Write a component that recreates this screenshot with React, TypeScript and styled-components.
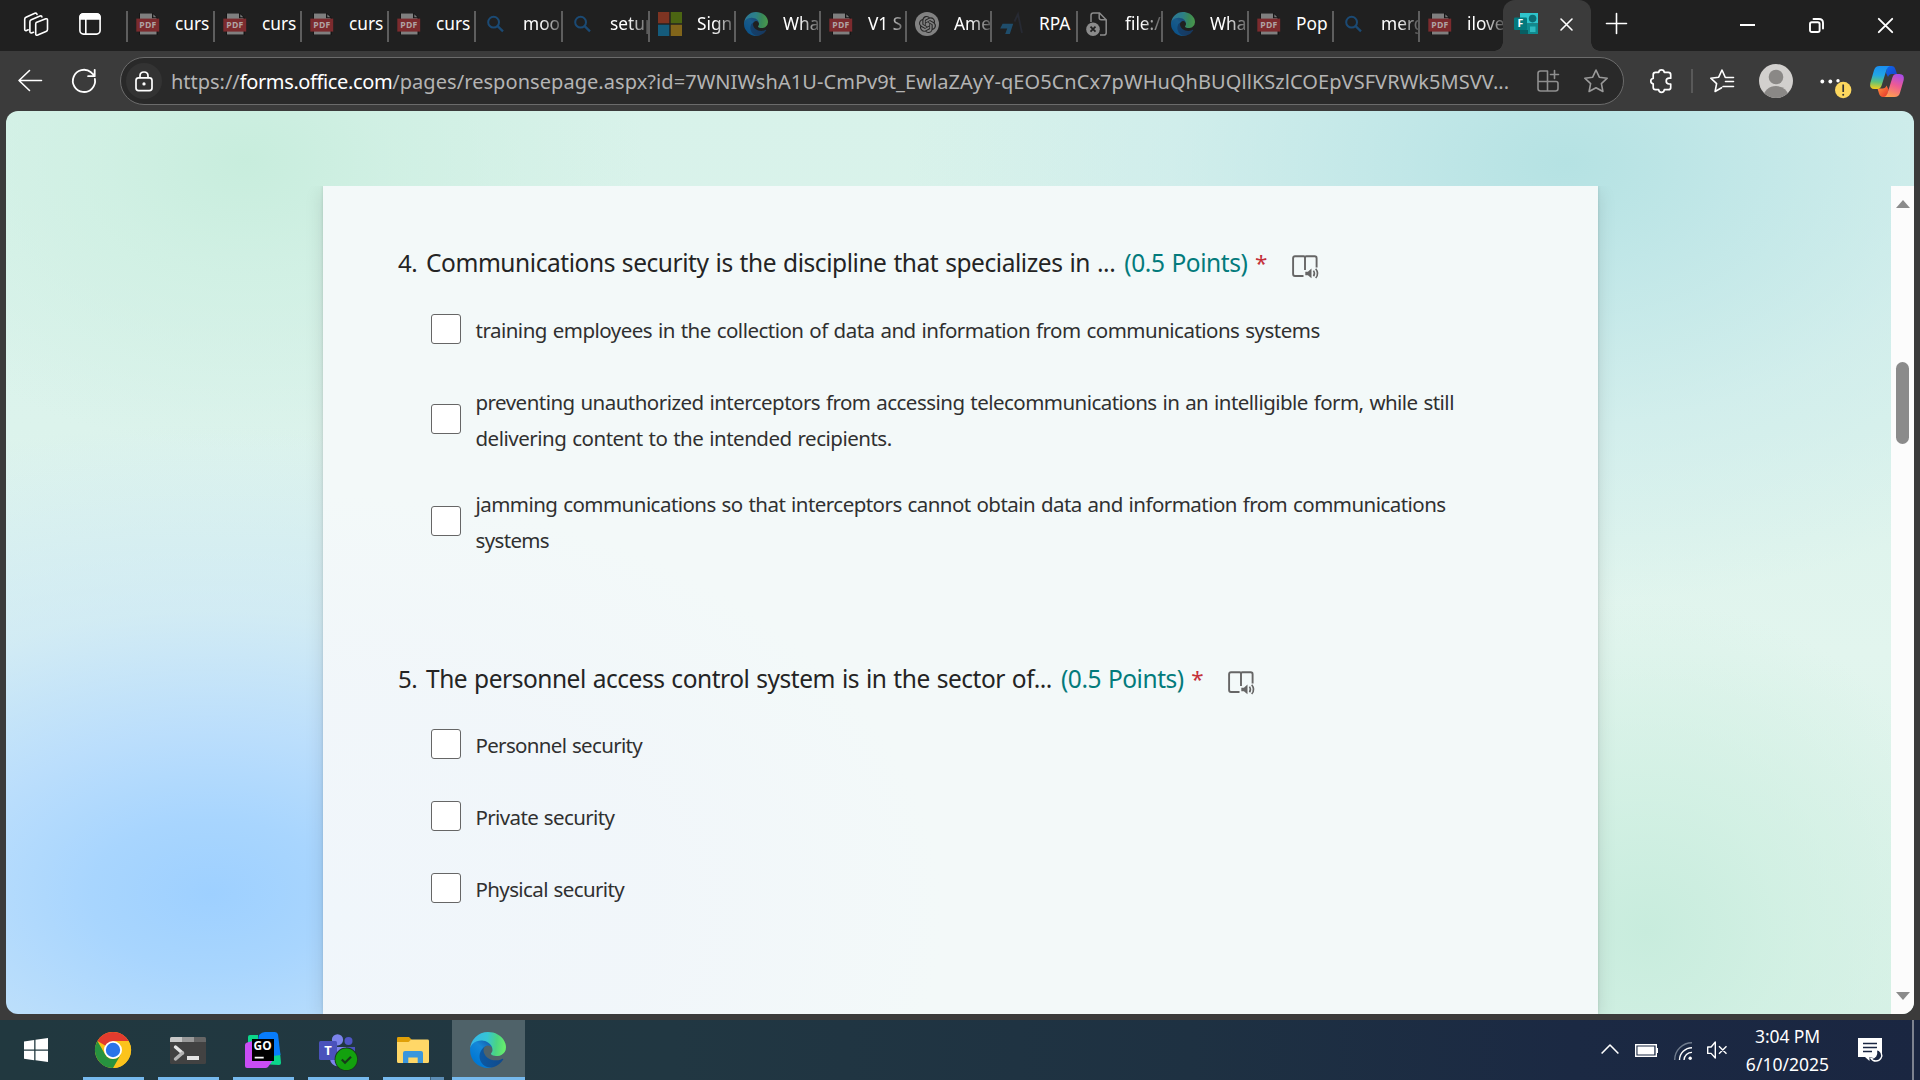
import React from "react";
import styled, { createGlobalStyle, css } from "styled-components";
import { SiOpenai } from "react-icons/si";

const Global = createGlobalStyle`
  * { box-sizing: border-box; }
  html, body { margin: 0; padding: 0; background: #3b3b3b; overflow: hidden; }
  body { font-family: "Noto Sans", "Open Sans", sans-serif; }
`;

const Screen = styled.div`
  width: 1920px;
  height: 1080px;
  display: flex;
  flex-direction: column;
  overflow: hidden;
  background: #3b3b3b;
`;

const Glyph = styled.svg<{ $w: number; $h?: number; $ml?: number; $mt?: number }>`
  display: block;
  flex: none;
  width: ${(p) => p.$w}px;
  height: ${(p) => p.$h ?? p.$w}px;
  margin-left: ${(p) => p.$ml ?? 0}px;
  margin-top: ${(p) => p.$mt ?? 0}px;
  overflow: visible;
`;

/* ---------- tab strip ---------- */

const TabStrip = styled.header`
  height: 51px;
  flex: none;
  display: flex;
  align-items: flex-start;
  background: #202020;
`;

const StripTools = styled.div`
  width: 126px;
  height: 48px;
  flex: none;
  display: flex;
  align-items: center;
  padding-left: 24px;
`;

const Tab = styled.div<{ $w: number }>`
  width: ${(p) => p.$w}px;
  height: 51px;
  flex: none;
  display: flex;
  align-items: flex-start;
`;

const TabRule = styled.span`
  width: 2px;
  height: 31px;
  margin-top: 11px;
  flex: none;
  background: #5e5e5e;
`;

const TabIcon = styled.span`
  width: 24px;
  height: 24px;
  margin: 12px 0 0 8px;
  flex: none;
  display: flex;
  align-items: center;
  justify-content: center;
`;

const TabLabel = styled.span<{ $fade?: boolean }>`
  flex: 1;
  min-width: 0;
  height: 48px;
  margin-left: 15px;
  overflow: hidden;
  white-space: nowrap;
  color: #fff;
  font-size: 17.3px;
  line-height: 48px;
  ${(p) => p.$fade && css`mask-image: linear-gradient(90deg, #000 calc(100% - 20px), rgba(0, 0, 0, 0.25) 100%);`}
`;

const ActiveTab = styled.div`
  width: 88px;
  height: 51px;
  flex: none;
  display: flex;
  align-items: flex-start;
  padding: 12px 0 0 11px;
  background: #3b3b3b;
  border-radius: 12px 12px 0 0;
  position: relative;
  &::before, &::after {
    content: "";
    position: absolute;
    bottom: 0;
    width: 9px;
    height: 9px;
  }
  &::before { left: -9px; background: radial-gradient(circle at 0 0, transparent 8.5px, #3b3b3b 9px); }
  &::after { right: -9px; background: radial-gradient(circle at 100% 0, transparent 8.5px, #3b3b3b 9px); }
`;

const WindowButtons = styled.div`
  flex: 1;
  height: 51px;
  display: flex;
  align-items: flex-start;
`;

/* ---------- toolbar ---------- */

const Toolbar = styled.nav`
  height: 60px;
  flex: none;
  display: flex;
  align-items: center;
  padding-left: 18px;
  background: #3b3b3b;
`;

const AddressBar = styled.div`
  width: 1504px;
  height: 48px;
  margin-left: 24px;
  flex: none;
  display: flex;
  align-items: center;
  border: 1.5px solid #6b6b6b;
  border-radius: 24px;
  background: #292929;
  padding-left: 5px;
`;

const LockDisc = styled.span`
  width: 36px;
  height: 36px;
  flex: none;
  border-radius: 50%;
  background: #333;
  display: flex;
  align-items: center;
  justify-content: center;
`;

const Url = styled.span`
  width: 1366px;
  margin: 1px 0 0 9px;
  flex: none;
  white-space: nowrap;
  font-size: 20px;
  line-height: 44px;
  letter-spacing: 0.06px;
  color: #b4b4b4;
`;

const UrlScheme = styled.span`
  letter-spacing: -0.02px;
`;

const UrlHost = styled.span`
  letter-spacing: -0.38px;
  color: #fff;
`;

const BarRule = styled.span`
  width: 2px;
  height: 24px;
  margin-left: 19px;
  flex: none;
  background: #595959;
`;

const Avatar = styled.span`
  width: 34px;
  height: 34px;
  margin-left: 25px;
  flex: none;
  border-radius: 50%;
  overflow: hidden;
  background: #d2d0ce;
`;

/* ---------- page ---------- */

const Page = styled.main`
  height: 903px;
  width: 1908px;
  margin-left: 6px;
  flex: none;
  display: flex;
  flex-direction: column;
  border-radius: 12px;
  overflow: hidden;
  background:
    radial-gradient(ellipse 760px 470px at 205px 783px, #9ed0ff 0%, rgba(166, 212, 255, 0.96) 16%, rgba(180, 218, 255, 0.85) 34%, rgba(194, 226, 250, 0.5) 60%, rgba(208, 234, 245, 0) 100%),
    radial-gradient(ellipse 400px 290px at 240px 50px, #c8eddd 0%, rgba(205, 239, 225, 0.75) 35%, rgba(216, 242, 233, 0) 100%),
    radial-gradient(ellipse 660px 440px at 1560px 52px, #b5e2e3 0%, rgba(189, 229, 231, 0.85) 25%, rgba(202, 234, 236, 0.55) 60%, rgba(220, 242, 240, 0) 100%),
    radial-gradient(ellipse 340px 330px at 1640px 820px, #c8ecdd 0%, rgba(206, 239, 225, 0.75) 40%, rgba(222, 244, 236, 0) 100%),
    linear-gradient(180deg, #d8f2ea 0%, #dcf3ec 35%, #e2f5ee 60%, #daf2e8 100%);
`;

const ScrollRegion = styled.div`
  flex: 1;
  margin-top: 75px;
  display: flex;
  overflow: hidden;
`;

const FormCard = styled.section`
  width: 1275px;
  margin: 0 293px 0 317px;
  flex: none;
  padding: 59px 0 0 74px;
  background:
    radial-gradient(ellipse 620px 420px at 0 88%, #f0f6fb 0%, rgba(241, 246, 250, 0.9) 55%, rgba(243, 249, 249, 0) 100%),
    #f3f9f9;
  box-shadow: 0 0 3px rgba(0, 0, 0, 0.12), 0 5px 18px rgba(0, 0, 0, 0.12);
`;

const Question = styled.article<{ $mb?: number }>`
  margin-bottom: ${(p) => p.$mb ?? 0}px;
`;

const Title = styled.h2<{ $ls: number }>`
  margin: 0;
  height: 36px;
  display: flex;
  font-weight: 400;
  font-size: 24.5px;
  line-height: 36px;
  color: #242424;
  white-space: pre;
  word-spacing: 1px;
  letter-spacing: ${(p) => p.$ls}px;
`;

const Num = styled.span`
  width: 29px;
  padding-left: 1px;
  flex: none;
  font-size: 24px;
  letter-spacing: -0.4px;
`;

const Points = styled.span`
  margin-left: 9px;
  color: #037b7c;
`;

const Required = styled.span`
  width: 12px;
  margin-left: 7.5px;
  font-size: 22.5px;
  color: #c4313a;
`;

const Choice = styled.label<{ $mt: number }>`
  display: flex;
  align-items: center;
  margin: ${(p) => p.$mt}px 0 0 34px;
`;

const Box = styled.span`
  width: 30px;
  height: 30px;
  margin-top: -2px;
  flex: none;
  border: 1.5px solid #666;
  border-radius: 3px;
  background: #fff;
`;

const ChoiceText = styled.span`
  margin-left: 14.5px;
  font-size: 20.5px;
  line-height: 36px;
  color: #303030;
  white-space: nowrap;
  word-spacing: 1px;
`;

const Line = styled.span<{ $ls: number }>`
  display: block;
  letter-spacing: ${(p) => p.$ls}px;
`;

const Scrollbar = styled.aside`
  width: 23px;
  flex: none;
  display: flex;
  flex-direction: column;
  align-items: center;
  padding: 14px 0;
  background: #fcfcfc;
`;

const Thumb = styled.span`
  width: 13px;
  height: 82px;
  margin-top: 154px;
  border-radius: 7px;
  background: #8b8b8b;
`;

const Arrow = styled.span<{ $down?: boolean }>`
  border-left: 7.5px solid transparent;
  border-right: 7.5px solid transparent;
  ${(p) =>
    p.$down
      ? css`border-top: 8px solid #8b8b8b; margin-top: auto;`
      : css`border-bottom: 8px solid #8b8b8b;`}
`;

/* ---------- taskbar ---------- */

const Taskbar = styled.footer`
  height: 60px;
  margin-top: 6px;
  flex: none;
  display: flex;
  background: linear-gradient(90deg, #21383f 0%, #213742 35%, #1e3142 62%, #1b2943 82%, #1a2641 100%);
`;

const StartButton = styled.div`
  width: 76px;
  height: 60px;
  flex: none;
  display: flex;
  align-items: center;
  padding-left: 24px;
`;

const TaskButton = styled.div<{ $w: number; $active?: boolean }>`
  width: ${(p) => p.$w}px;
  height: 60px;
  margin-left: ${(p) => (p.$active ? 1 : 0)}px;
  flex: none;
  display: flex;
  flex-direction: column;
  align-items: center;
  background: ${(p) => (p.$active ? "#4f6269" : "transparent")};
`;

const TaskIcon = styled.span<{ $mt?: number }>`
  height: 57px;
  display: flex;
  align-items: center;
  padding: ${(p) => p.$mt ?? 3}px 1px 0 0;
`;

const Running = styled.span<{ $w: number; $split?: boolean }>`
  width: ${(p) => p.$w}px;
  height: 3px;
  background: ${(p) => (p.$split ? "linear-gradient(90deg, #76b9ed 47px, #3f627c 47px, #3f627c 48px, #5c8db5 48px)" : "#76b9ed")};
`;

const Tray = styled.div`
  margin-left: auto;
  display: flex;
  align-items: flex-start;
`;

const Clock = styled.div`
  width: 110px;
  margin-left: 5px;
  display: flex;
  flex-direction: column;
  align-items: center;
  color: #fff;
  font-size: 17.5px;
  line-height: 28px;
  padding: 2px 0 0 1px;
`;

const ClockLine = styled.span<{ $ls: number }>`
  letter-spacing: ${(p) => p.$ls}px;
  white-space: nowrap;
`;

const DesktopEdge = styled.span`
  width: 2px;
  height: 60px;
  margin: 0 6px 0 30px;
  background: #7c8290;
`;

/* ---------- favicons ---------- */

const PdfIcon = () => (
  <Glyph $w={24} viewBox="0 0 24 24">
    <path d="M3 1h14l5 5v17H3z" fill="#161616" />
    <path d="M4 1.5h12v4.8h4.5V22.5H4z" fill="#7f7f7f" />
    <path d="M17.3 2.2v3h3z" fill="#777" />
    <path d="M.3 6.6h22.9v13H.3z" fill="#7c2b2e" />
    <text x="11.9" y="16.3" textAnchor="middle" fontFamily="Open Sans, sans-serif" fontWeight="700" fontSize="8.6" fill="#b0a4a4" letterSpacing=".3">PDF</text>
  </Glyph>
);

const SearchIcon = () => (
  <Glyph $w={24} viewBox="0 0 24 24" fill="none" stroke="#1b4a74" strokeWidth="2">
    <circle cx="9.6" cy="10.2" r="5.4" />
    <path d="M13.6 14.2l5.4 5.2" strokeWidth="2.3" />
  </Glyph>
);

const MicrosoftIcon = () => (
  <Glyph $w={24} viewBox="0 0 24 24">
    <path d="M0 0h11.3v11.3H0z" fill="#7e3422" />
    <path d="M12.7 0H24v11.3H12.7z" fill="#4b6512" />
    <path d="M0 12.7h11.3V24H0z" fill="#155b7b" />
    <path d="M12.7 12.7H24V24H12.7z" fill="#81651a" />
  </Glyph>
);

const EdgeLogo = ({ size, id, dim }: { size: number; id: string; dim?: boolean }) => (
  <Glyph $w={size} viewBox="0 0 256 256" opacity={dim ? 0.58 : 1}>
    <defs>
      <linearGradient id={`${id}a`} x1="63" y1="178" x2="241" y2="178" gradientUnits="userSpaceOnUse">
        <stop offset="0" stopColor="#0c59a4" />
        <stop offset="1" stopColor="#114a8b" />
      </linearGradient>
      <linearGradient id={`${id}b`} x1="150" y1="95" x2="45" y2="215" gradientUnits="userSpaceOnUse">
        <stop offset="0" stopColor="#1666b4" />
        <stop offset=".35" stopColor="#1587d8" />
        <stop offset="1" stopColor="#0078d4" />
      </linearGradient>
      <linearGradient id={`${id}c`} x1="15" y1="80" x2="250" y2="110" gradientUnits="userSpaceOnUse">
        <stop offset="0" stopColor="#35b6e9" />
        <stop offset=".45" stopColor="#36c5d4" />
        <stop offset=".75" stopColor="#4bd482" />
        <stop offset="1" stopColor="#66eb6e" />
      </linearGradient>
    </defs>
    <g transform="translate(-4.63 -4.92)">
      <path fill={`url(#${id}a)`} d="M235.68 195.46a93.73 93.73 0 01-10.54 4.71 101.87 101.87 0 01-35.9 6.46c-47.32 0-88.54-32.55-88.54-74.32A31.48 31.48 0 01117.13 105c-42.8 1.8-53.8 46.4-53.8 72.53 0 73.88 68.09 81.37 82.76 81.37 7.91 0 19.84-2.3 27-4.56l1.31-.44A128.34 128.34 0 00241 201.1a4 4 0 00-5.32-5.64z" />
      <path fill={`url(#${id}b)`} d="M110.34 246.34A79.2 79.2 0 0187.6 225a80.72 80.72 0 0129.53-120c3.12-1.47 8.45-4.13 15.54-4a32.35 32.35 0 0125.69 13 31.88 31.88 0 016.36 18.66c0-.21 24.46-79.6-80-79.6-43.9 0-80 41.66-80 78.21a130.15 130.15 0 0012.11 56 128 128 0 00156.38 67.11 75.55 75.55 0 01-62.78-8z" />
      <path fill={`url(#${id}c)`} d="M156.94 153.78c-.81 1.05-3.3 2.5-3.3 5.66 0 2.61 1.7 5.12 4.72 7.23 14.38 10 41.49 8.68 41.56 8.68a59.56 59.56 0 0030.27-8.35 61.38 61.38 0 0030.43-52.88c.26-22.41-8-37.31-11.34-43.91-21.19-41.44-66.92-65.28-116.67-65.28a128 128 0 00-128 126.2c.48-36.54 36.8-66.05 80-66.05 3.5 0 23.46.34 42 10.07 16.34 8.58 24.9 18.94 30.85 29.21 6.18 10.67 7.28 24.15 7.28 29.52s-2.74 13.33-7.8 19.9z" />
    </g>
  </Glyph>
);

const OpenAiDisc = styled.span`
  width: 24px;
  height: 24px;
  border-radius: 50%;
  background: #828282;
  color: #262626;
  display: flex;
  align-items: center;
  justify-content: center;
`;

const RpaIcon = () => (
  <Glyph $w={24} viewBox="0 0 24 24">
    <path d="M2.6 11.8h10.6l-3.4 10.2H5.2l2-5.4H.2z" fill="#1f4d6b" />
    <path d="M14.5 9.5L18 2l4 19" fill="none" stroke="#272a33" strokeWidth="1.8" />
  </Glyph>
);

const FileErrorIcon = () => (
  <Glyph $w={24} viewBox="0 0 24 24" fill="none" stroke="#8b8b8b" strokeWidth="1.5">
    <path d="M5 10V3.2Q5 .9 7.300 .9H13.500l6.700 6.800v13q0 2.400-2.400 2.400H14M13.200 1v4.800q0 2 2 2h4.900" />
    <circle cx="7" cy="17.200" r="6.800" fill="#8b8b8b" stroke="none" />
    <path d="M4.500 14.700l5 5m0-5l-5 5" stroke="#202020" strokeWidth="1.700" />
  </Glyph>
);

const FormsIcon = () => (
  <Glyph $w={24} viewBox="0 0 24 24">
    <path d="M6 1h18v10.5H6z" fill="#2fc5cc" />
    <path d="M6 11.5h18V22H6z" fill="#0f8b8f" />
    <circle cx="18.6" cy="6.6" r="3.8" fill="#0b6d74" />
    <path d="M16 14.5h5.500v5.500H16z" fill="#2fb9bf" />
    <path d="M6 18h8v4H6z" fill="#075e62" />
    <rect x="0" y="5.500" width="13" height="12.500" rx="1" fill="#04797d" />
    <text x="6.500" y="15.400" textAnchor="middle" fontFamily="Open Sans, sans-serif" fontWeight="700" fontSize="10.500" fill="#fff">F</text>
  </Glyph>
);

type Kind = "pdf" | "search" | "ms" | "edge" | "openai" | "rpa" | "file";

const Favicon = ({ kind, id }: { kind: Kind; id: string }) => {
  switch (kind) {
    case "pdf": return <PdfIcon />;
    case "search": return <SearchIcon />;
    case "ms": return <MicrosoftIcon />;
    case "edge": return <EdgeLogo size={24} id={id} dim />;
    case "openai": return <OpenAiDisc><SiOpenai size={17} /></OpenAiDisc>;
    case "rpa": return <RpaIcon />;
    default: return <FileErrorIcon />;
  }
};

const tabs: { kind: Kind; label: string; w: number; fade?: boolean }[] = [
  { kind: "pdf", label: "curs", w: 87 },
  { kind: "pdf", label: "curs", w: 87 },
  { kind: "pdf", label: "curs", w: 87 },
  { kind: "pdf", label: "curs", w: 87 },
  { kind: "search", label: "moo", w: 87, fade: true },
  { kind: "search", label: "setup", w: 87, fade: true },
  { kind: "ms", label: "Sign", w: 86, fade: true },
  { kind: "edge", label: "Wha", w: 85, fade: true },
  { kind: "pdf", label: "V1 S", w: 86, fade: true },
  { kind: "openai", label: "Ame", w: 85, fade: true },
  { kind: "rpa", label: "RPA", w: 86 },
  { kind: "file", label: "file:/", w: 85, fade: true },
  { kind: "edge", label: "Wha", w: 86, fade: true },
  { kind: "pdf", label: "Pop", w: 85 },
  { kind: "search", label: "merg", w: 86, fade: true },
  { kind: "pdf", label: "ilove", w: 85, fade: true },
];

/* ---------- toolbar and tray drawings ---------- */

const line = { fill: "none", stroke: "#fff", strokeWidth: 1.6, strokeLinecap: "round" as const, strokeLinejoin: "round" as const };

const ImmersiveReader = () => (
  <Glyph $w={27} $h={24} $ml={25} $mt={10} viewBox="0 0 27 24">
    <path d="M11.500 21H3Q1.100 21 1.100 19V3.200Q1.100 1.300 3 1.300h8.700q1.300 0 1.300 1.400v12.300M13 2.700q0-1.400 1.300-1.400h8.400q1.900 0 1.900 1.900v9.300" fill="none" stroke="#666" strokeWidth="1.900" />
    <path d="M13.300 16.800h2.600l3.600-3.200v9.600l-3.600-3h-2.600z" fill="#666" />
    <path d="M21.500 15.600q1.900 2.800 0 5.600M23.700 13.700q3.800 4.700 0 9.400" fill="none" stroke="#666" strokeWidth="1.600" />
  </Glyph>
);

const Copilot = () => (
  <Glyph $w={34} $h={31} $ml={18} viewBox="0 0 34 31">
    <defs>
      <linearGradient id="cpA" x1="10" y1="0" x2="8" y2="23" gradientUnits="userSpaceOnUse">
        <stop offset="0" stopColor="#1a8ff0" />
        <stop offset=".4" stopColor="#22a6e6" />
        <stop offset=".7" stopColor="#5fc27a" />
        <stop offset="1" stopColor="#f2cd1c" />
      </linearGradient>
      <linearGradient id="cpB" x1="29" y1="7" x2="20" y2="31" gradientUnits="userSpaceOnUse">
        <stop offset="0" stopColor="#a24af0" />
        <stop offset=".5" stopColor="#ee5b93" />
        <stop offset="1" stopColor="#ffa04e" />
      </linearGradient>
      <linearGradient id="cpC" x1="17" y1="0" x2="26" y2="9" gradientUnits="userSpaceOnUse">
        <stop offset="0" stopColor="#0f66e8" />
        <stop offset="1" stopColor="#1747cf" />
      </linearGradient>
      <linearGradient id="cpD" x1="8" y1="22" x2="16" y2="30" gradientUnits="userSpaceOnUse">
        <stop offset="0" stopColor="#ff8a3c" />
        <stop offset="1" stopColor="#e8402e" />
      </linearGradient>
    </defs>
    <path d="M17 0h4.500q3 0 4 3.400L27 8h-5q-3 0-4 3l-2-4z" fill="url(#cpC)" />
    <path d="M17 31h-4q-3 0-4-3.400L7.500 22.500h5q3 0 4-3l2 4z" fill="url(#cpD)" />
    <path d="M9.500 0H20q-2.500.6-3.400 3.600l-5 16q-1 3.400-4.200 3.400H4.600Q-.8 23 .3 17L4 4.300Q5.200 0 9.500 0z" fill="url(#cpA)" />
    <path d="M24.500 31H14q2.500-.6 3.400-3.600l5-16Q23.400 8 26.600 8h2.800q5.400 0 4.300 6L30 26.700Q28.800 31 24.500 31z" fill="url(#cpB)" />
  </Glyph>
);

const ChromeLogo = () => (
  <Glyph $w={36} viewBox="0 0 48 48">
    <circle cx="24" cy="24" r="24" fill="#fbc116" />
    <path d="M24 24L3.200 12A24 24 0 0 1 44.800 12z" fill="#e33b2e" />
    <path d="M24 12h20.800A24 24 0 0 1 24 48l10.400-18z" fill="#fcc31c" />
    <path d="M3.200 12A24 24 0 0 0 24 48l10.400-18A12 12 0 0 1 13.600 30z" fill="#27923f" />
    <circle cx="24" cy="24" r="12" fill="#fff" />
    <circle cx="24" cy="24" r="9.600" fill="#2a74ea" />
  </Glyph>
);

const TerminalLogo = () => (
  <Glyph $w={36} $h={27} viewBox="0 0 36 27">
    <rect width="36" height="27" rx="1.500" fill="#424242" />
    <path d="M0 5V1.500Q0 0 1.500 0H12v5z" fill="#c8c8c8" />
    <path d="M12 0h12v5H12z" fill="#999" />
    <path d="M24 0h10.500Q36 0 36 1.500V5H24z" fill="#666" />
    <path d="M5.500 10l7 6" stroke="#e6e6e6" strokeWidth="3.400" strokeLinecap="round" />
    <path d="M12.500 16l-7 6" stroke="#b5b5b5" strokeWidth="3.400" strokeLinecap="round" />
    <path d="M17 19h12v4H17z" fill="#e4e4e4" />
  </Glyph>
);

const GoLandLogo = () => (
  <Glyph $w={36} viewBox="0 0 36 36">
    <path d="M3 5q0-2 2-2h8v12H3z" fill="#0bd68a" />
    <path d="M24 20h11l1 11q0 2-2 2l-10-.500z" fill="#0bd68a" />
    <path d="M14 3q3-3 6-3h10q2.500 0 3 2.500L35.500 23 28 24H10z" fill="#087cfa" />
    <path d="M0 13q0-2 2-2.500L12 8l16 20-5 7q-1 1-2.500 1H2q-2 0-2-2z" fill="#c94df5" />
    <path d="M7 7h22v22H7z" fill="#000" />
    <text x="8.600" y="17.600" fontFamily="Open Sans, sans-serif" fontWeight="700" fontSize="11.500" fill="#fff" textLength="18" lengthAdjust="spacingAndGlyphs">GO</text>
    <path d="M9.700 24.800h9v1.800h-9z" fill="#fff" />
  </Glyph>
);

const TeamsLogo = () => (
  <Glyph $w={39} $h={37} viewBox="0 0 39 37">
    <circle cx="29.500" cy="7" r="4" fill="#4f56c4" />
    <circle cx="18.500" cy="5.800" r="5.600" fill="#7b83eb" />
    <path d="M24 13h12v10H24z" fill="#4b53bc" />
    <path d="M11 13h16v12q-1 7-8 7.500-7-1-8-7z" fill="#7b83eb" />
    <rect x="0" y="7" width="18" height="19" rx="1.500" fill="#4a52bb" />
    <text x="9" y="21" textAnchor="middle" fontFamily="Open Sans, sans-serif" fontWeight="700" fontSize="13" fill="#fff">T</text>
    <circle cx="27.300" cy="25.300" r="11.700" fill="#1b3a1f" />
    <circle cx="27.300" cy="25.300" r="10.800" fill="#13a10e" />
    <path d="M22.800 25.500l3.200 3.200 6-6" fill="none" stroke="#173c1a" strokeWidth="2.200" />
  </Glyph>
);

const ExplorerLogo = () => (
  <Glyph $w={32} $h={26} viewBox="0 0 32 26">
    <path d="M0 1.200Q0 0 1.200 0H12l2.500 2.500L12 5H0z" fill="#e0a008" />
    <path d="M0 5h11.500L14 2.600h16.500Q32 2.600 32 4v20.500Q32 26 30.500 26H1.500Q0 26 0 24.500z" fill="#ffd767" />
    <path d="M6 26V16q0-2 2-2h16q2 0 2 2v10h-5.300v-5.500h-9.400V26z" fill="#3a96dd" />
  </Glyph>
);

export default function App() {
  return (
    <Screen>
      <Global />
      <TabStrip>
        <StripTools>
          <Glyph $w={24} viewBox="0 0 24 24" {...line}>
            <path d="M12.200 10.600l9.600-3.800q1.700-.500 1.700 1.200v9.400q0 1.500-1.500 2.100l-8.300 3.600q-2 .700-2-1.300v-9.200q0-1.400.5-2z" />
            <path d="M9.500 20.300l-1.900.6Q5.900 21.300 5.900 19.500V9.800q0-1.400 1.400-2L16 4q1.700-.500 1.900 1" />
            <path d="M4.200 17.800l-1.800.8Q.7 19 .7 17.200V7.200Q.7 5.800 2 5.200l8.800-4Q12.600.7 13 2.400" />
          </Glyph>
          <Glyph $w={22} $ml={31} viewBox="0 0 22 22" {...line}>
            <rect x=".9" y=".9" width="20.200" height="20.200" rx="3.600" />
            <path d="M1 6V4q0-3 3-3h14q3 0 3 3v2z" fill="#fff" />
            <path d="M6.800 6v15" />
          </Glyph>
        </StripTools>
        {tabs.map((t, i) => (
          <Tab key={i} $w={t.w}>
            <TabRule />
            <TabIcon><Favicon kind={t.kind} id={`tab${i}`} /></TabIcon>
            <TabLabel $fade={t.fade}>{t.label}</TabLabel>
          </Tab>
        ))}
        <ActiveTab>
          <FormsIcon />
          <Glyph $w={13} $ml={22} $mt={6} viewBox="0 0 13 13" {...line}>
            <path d="M1 1l11 11M12 1L1 12" />
          </Glyph>
        </ActiveTab>
        <WindowButtons>
          <Glyph $w={21} $ml={15} $mt={13} viewBox="0 0 21 21" {...line}>
            <path d="M10.500.500v20M.500 10.500h20" />
          </Glyph>
          <Glyph $w={15} $h={2} $ml={113} $mt={24} viewBox="0 0 15 2"><path d="M0 0h15v2H0z" fill="#fff" /></Glyph>
          <Glyph $w={15} $ml={54} $mt={18} viewBox="0 0 15 15" {...line} strokeWidth={1.900}>
            <rect x="1" y="4.300" width="9.600" height="9.700" rx="1.800" />
            <path d="M4.500 1H10q4 0 4 4v5.500" />
          </Glyph>
          <Glyph $w={15} $ml={54} $mt={18} viewBox="0 0 15 15" {...line} strokeWidth={1.900}>
            <path d="M.800.800l13.400 13.400M14.200.800L.800 14.200" />
          </Glyph>
        </WindowButtons>
      </TabStrip>

      <Toolbar>
        <Glyph $w={24} viewBox="0 0 24 24" {...line}>
          <path d="M11.500 1.500L1 11.500l10.500 10M1 11.500h22.500" />
        </Glyph>
        <Glyph $w={24} $ml={30} viewBox="0 0 24 24" {...line} strokeWidth={1.800}>
          <path d="M22.900 10A11.100 11.100 0 1 1 19 3.300L22.500 6.600M22.700.800v6.400h-6.600" />
        </Glyph>
        <AddressBar>
          <LockDisc>
            <Glyph $w={18} $h={21} viewBox="0 0 18 21" {...line} strokeWidth={1.700}>
              <rect x="1" y="6.800" width="16" height="12.800" rx="2.600" />
              <path d="M5 6.500V4.800Q5 1 9 1t4 3.800v1.700" />
              <circle cx="9" cy="12.900" r=".8" fill="#fff" />
            </Glyph>
          </LockDisc>
          <Url>
            <UrlScheme>https://</UrlScheme>
            <UrlHost>forms.office.com</UrlHost>
            /pages/responsepage.aspx?id=7WNIWshA1U-CmPv9t_EwlaZAyY-qEO5CnCx7pWHuQhBUQllKSzlCOEpVSFVRWk5MSVV...
          </Url>
          <Glyph $w={22} viewBox="0 0 22 22" {...line} stroke="#8f8f8f">
            <path d="M10.500 1H3.500Q1 1 1 3.500v15Q1 21 3.500 21h15q2.500 0 2.500-2.500v-5q0-2-2-2H1M10.500 1v20M17.500.500v8M13.500 4.500h8" />
          </Glyph>
          <Glyph $w={24} $ml={25} viewBox="0 0 24 24" {...line} stroke="#9a9a9a">
            <path d="M12 1l3.300 7.200 7.900 1-5.800 5.400 1.500 7.900L12 18.700l-6.900 3.800 1.500-7.900L.8 9.200l7.900-1z" />
          </Glyph>
        </AddressBar>
        <Glyph $w={22} $h={24} $ml={26} viewBox="0 0 22 24" {...line} strokeWidth={1.700}>
          <path d="M5.500 3.400h3.200q.2-2.600 2.800-2.600t2.800 2.600h4q2.400 0 2.400 2.400v3.400h-1.600a2.900 2.900 0 0 0 0 5.800h1.600v3.400q0 2.300-2.400 2.300h-4q-.2 2.600-2.800 2.600t-2.800-2.600H5.500q-2.300 0-2.300-2.300v-3.600Q.8 14.500.8 12.100t2.400-2.600V5.800q0-2.400 2.300-2.400z" />
        </Glyph>
        <BarRule />
        <Glyph $w={24} $ml={17} viewBox="0 0 24 24" {...line}>
          <path d="M15.200 8.200l-3.200-7.200-3.300 7.200-7.900 1 5.800 5.400-1.500 7.900 6.500-3.800M15.500 8.500h8M15.500 12.500h8M13 17.500h10.500" />
        </Glyph>
        <Avatar>
          <Glyph $w={34} viewBox="0 0 34 34">
            <circle cx="17" cy="13" r="7.300" fill="#8a8886" />
            <ellipse cx="17" cy="33" rx="12.500" ry="11" fill="#8a8886" />
          </Glyph>
        </Avatar>
        <Glyph $w={32} $h={34} $ml={27} $mt={1} viewBox="0 0 32 34">
          <circle cx="2.300" cy="16.500" r="1.900" fill="#fff" />
          <circle cx="10.300" cy="16.500" r="1.900" fill="#fff" />
          <circle cx="18" cy="15.800" r="1.700" fill="#fff" />
          <circle cx="23.200" cy="25" r="8.200" fill="#fcd75e" />
          <path d="M23.200 19.500v7.500" stroke="#333" strokeWidth="1.700" />
          <circle cx="23.200" cy="29.800" r="1" fill="#333" />
        </Glyph>
        <Copilot />
      </Toolbar>

      <Page>
        <ScrollRegion>
          <FormCard>
            <Question $mb={103}>
              <Title $ls={-0.44}>
                <Num>4.</Num>
                <span>Communications security is the discipline that specializes in ...</span>
                <Points>(0.5 Points)</Points>
                <Required>*</Required>
                <ImmersiveReader />
              </Title>
              <Choice $mt={31}>
                <Box />
                <ChoiceText><Line $ls={-0.51}>training employees in the collection of data and information from communications systems</Line></ChoiceText>
              </Choice>
              <Choice $mt={36}>
                <Box />
                <ChoiceText>
                  <Line $ls={-0.53}>preventing unauthorized interceptors from accessing telecommunications in an intelligible form, while still</Line>
                  <Line $ls={-0.49}>delivering content to the intended recipients.</Line>
                </ChoiceText>
              </Choice>
              <Choice $mt={30}>
                <Box />
                <ChoiceText>
                  <Line $ls={-0.54}>jamming communications so that interceptors cannot obtain data and information from communications</Line>
                  <Line $ls={-0.65}>systems</Line>
                </ChoiceText>
              </Choice>
            </Question>
            <Question>
              <Title $ls={-0.47}>
                <Num>5.</Num>
                <span>The personnel access control system is in the sector of...</span>
                <Points>(0.5 Points)</Points>
                <Required>*</Required>
                <ImmersiveReader />
              </Title>
              <Choice $mt={30}><Box /><ChoiceText><Line $ls={-0.67}>Personnel security</Line></ChoiceText></Choice>
              <Choice $mt={36}><Box /><ChoiceText><Line $ls={-0.63}>Private security</Line></ChoiceText></Choice>
              <Choice $mt={36}><Box /><ChoiceText><Line $ls={-0.62}>Physical security</Line></ChoiceText></Choice>
            </Question>
          </FormCard>
          <Scrollbar>
            <Arrow />
            <Thumb />
            <Arrow $down />
          </Scrollbar>
        </ScrollRegion>
      </Page>

      <Taskbar>
        <StartButton>
          <Glyph $w={24} viewBox="0 0 24 24">
            <path d="M0 3.500L10.200 2v9.500H0zM11.500 1.800L24 0v11.500H11.500zM0 12.700h10.200v9.500L0 20.700zM11.500 12.700H24V24l-12.500-1.700z" fill="#fff" />
          </Glyph>
        </StartButton>
        <TaskButton $w={75}><TaskIcon><ChromeLogo /></TaskIcon><Running $w={61} /></TaskButton>
        <TaskButton $w={75}><TaskIcon><TerminalLogo /></TaskIcon><Running $w={61} /></TaskButton>
        <TaskButton $w={75}><TaskIcon><GoLandLogo /></TaskIcon><Running $w={61} /></TaskButton>
        <TaskButton $w={75}><TaskIcon $mt={7}><TeamsLogo /></TaskIcon><Running $w={61} /></TaskButton>
        <TaskButton $w={75}><TaskIcon><ExplorerLogo /></TaskIcon><Running $w={61} $split /></TaskButton>
        <TaskButton $w={73} $active><TaskIcon><EdgeLogo size={36} id="task" /></TaskIcon><Running $w={73} /></TaskButton>
        <Tray>
          <Glyph $w={18} $h={10} $mt={24} viewBox="0 0 18 10" {...line} strokeLinecap="butt"><path d="M.600 9.500L9 1l8.400 8.500" /></Glyph>
          <Glyph $w={23} $h={13} $ml={16} $mt={24} viewBox="0 0 23 13">
            <path d="M.7.7h20.600v11.600H.7z" fill="none" stroke="#fff" strokeWidth="1.400" />
            <path d="M2.500 2.500h16.800v8H2.500z" fill="#fff" /><path d="M21.500 4h1.500v5h-1.500z" fill="#fff" />
          </Glyph>
          <Glyph $w={18} $ml={16} $mt={22} viewBox="0 0 18 18" fill="none" strokeWidth="1.400">
            <path d="M.7 18A17.300 17.300 0 0 1 18 .7" stroke="#6f7b8c" />
            <path d="M5.500 18A12.500 12.500 0 0 1 18 5.700M10 18a8 8 0 0 1 8-7.600" stroke="#fff" />
            <circle cx="16.200" cy="16.300" r="1.700" fill="#fff" />
          </Glyph>
          <Glyph $w={20} $h={18} $ml={15} $mt={21} viewBox="0 0 20 18" {...line} strokeWidth={1.400} strokeLinecap="butt">
            <path d="M.700 6h3.400L8.300 1v16l-4.200-4.600H.700zM12 5.200l7.500 7.600M19.500 5.200L12 12.800" />
          </Glyph>
          <Clock>
            <ClockLine $ls={-0.1}>3:04 PM</ClockLine>
            <ClockLine $ls={0.02}>6/10/2025</ClockLine>
          </Clock>
          <Glyph $w={24} $h={24} $ml={16} $mt={18} viewBox="0 0 24 24">
            <path d="M0 0h24v19H11.500v4L7 19H0z" fill="#fff" />
            <path d="M5 5.500h14M5 9.500h14M5 13.500h9" stroke="#1b2743" strokeWidth="1.400" />
            <path d="M18.500 11.500a5.800 5.800 0 1 1-5.500 8.800q6.500.2 5.500-8.800z" fill="#1b2743" stroke="#fff" strokeWidth="1.400" />
          </Glyph>
          <DesktopEdge />
        </Tray>
      </Taskbar>
    </Screen>
  );
}
